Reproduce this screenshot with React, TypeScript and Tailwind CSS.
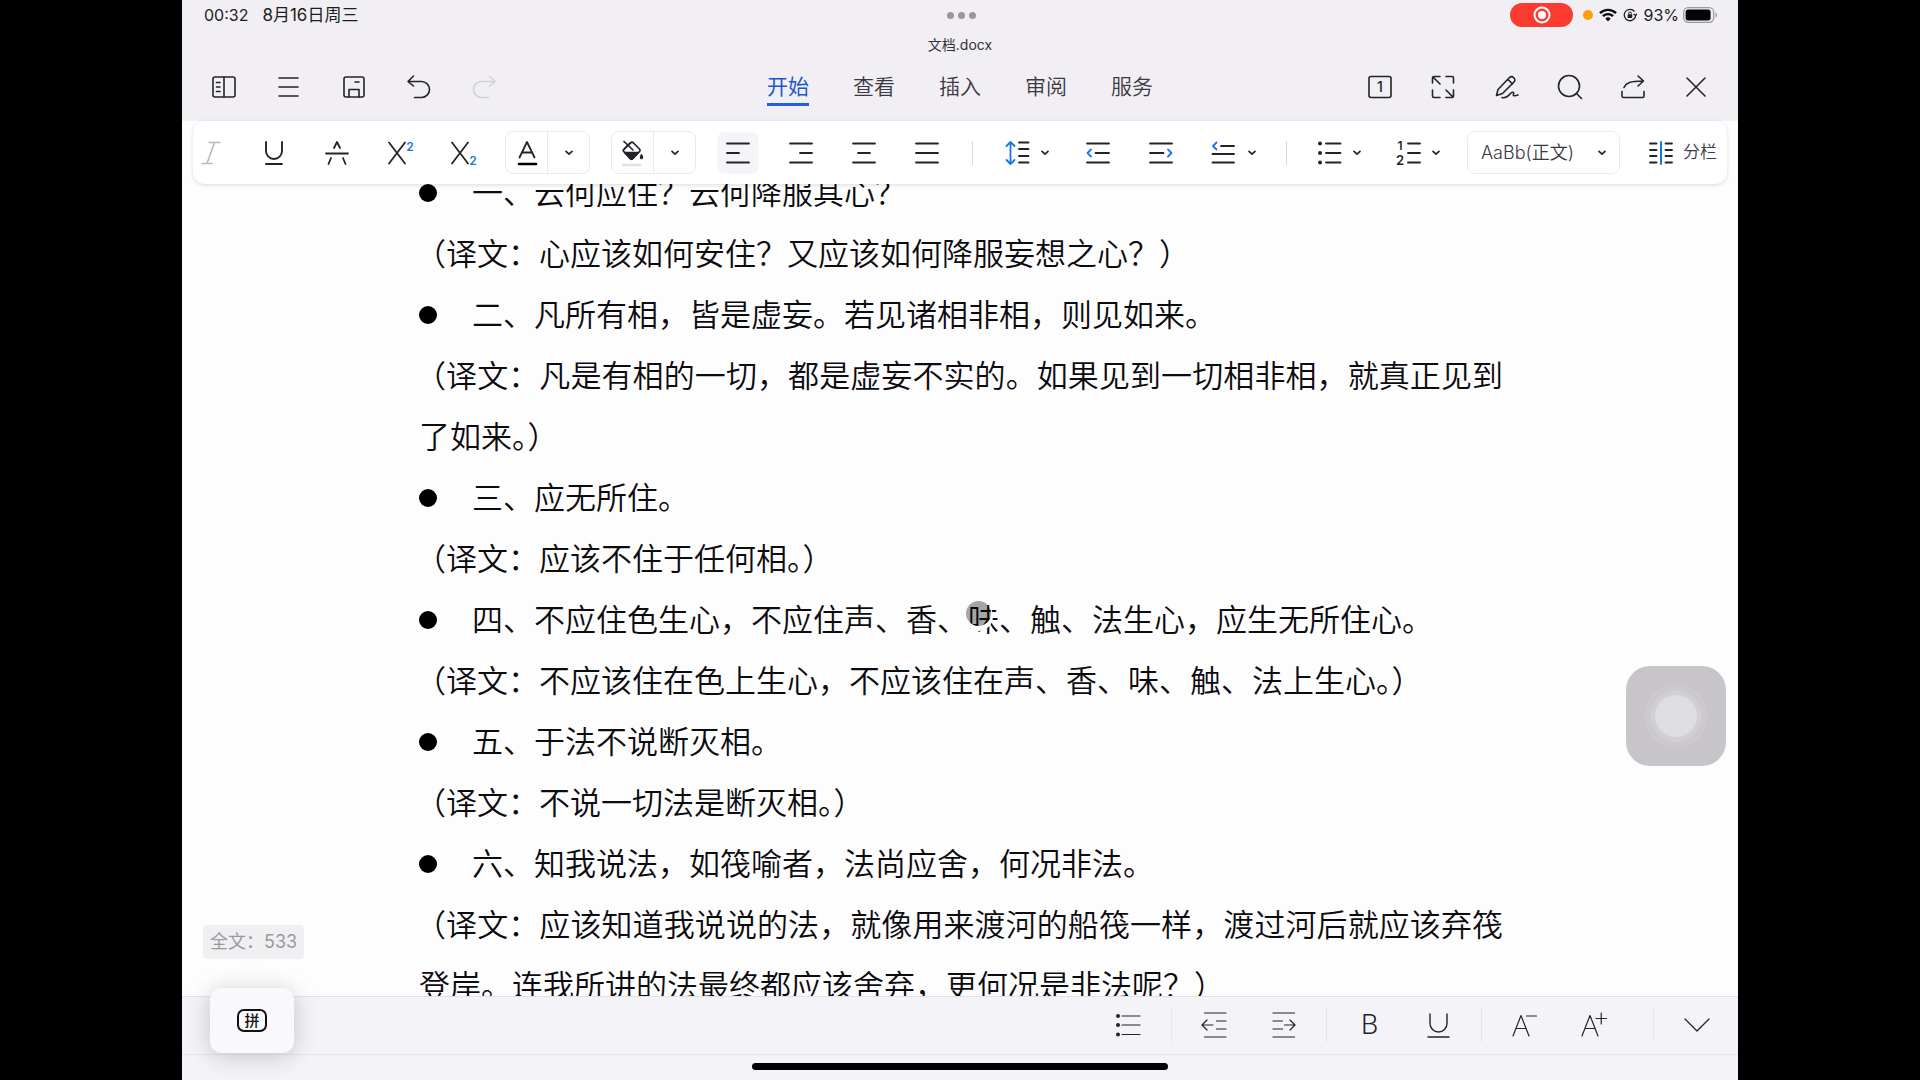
import React from 'react';

const INK = '#242328';
const BLUE = '#1677e6';

interface IconProps {
    children: React.ReactNode;
    size?: number;
    stroke?: number;
    color?: string;
}

/** Line icon on a 24 unit grid */
function Icon({ children, size = 24, stroke = 1.6, color = INK }: IconProps) {
    return (
        <svg
            width={size}
            height={size}
            viewBox="0 0 24 24"
            fill="none"
            stroke={color}
            strokeWidth={stroke}
            strokeLinecap="round"
            strokeLinejoin="round"
            className="shrink-0 overflow-visible"
            aria-hidden="true"
        >
            {children}
        </svg>
    );
}

function Chevron() {
    return (
        <svg width="8" height="6" viewBox="0 0 8 6" fill="none" stroke={INK} strokeWidth="1.7" strokeLinecap="round" strokeLinejoin="round" aria-hidden="true">
            <path d="M1 1.3 4 4.2 7 1.3" />
        </svg>
    );
}

function IconText({ x, y, size, color = INK, weight = 400, children }: { x: number; y: number; size: number; color?: string; weight?: number; children: string }) {
    return (
        <text x={x} y={y} fontSize={size} fontWeight={weight} fontFamily="Inter, sans-serif" fill={color} stroke="none" textAnchor="middle">
            {children}
        </text>
    );
}

interface Tool {
    label: string;
    icon: React.ReactNode;
    disabled?: boolean;
}

const leftTools: Tool[] = [
    {
        label: '目录',
        icon: (
            <Icon>
                <rect x="1" y="2" width="22" height="20" rx="2" />
                <path d="M12 2v20M4.5 7.5h3.5M4.5 12h3.5M4.5 16.5h3.5" />
            </Icon>
        ),
    },
    { label: '菜单', icon: <Icon><path d="M2 3h19M2 12h19M2 21h19" /></Icon> },
    {
        label: '保存',
        icon: (
            <Icon>
                <rect x="2" y="2" width="20" height="20" rx="2" />
                <path d="M7 22v-7.500h10V22M13 7h4" />
            </Icon>
        ),
    },
    { label: '撤销', icon: <Icon><path d="M6.500 1 1 6.500l5.500 4.500M1.500 6.500H14.500a8 8 0 0 1 0 16H7.500" /></Icon> },
    { label: '恢复', disabled: true, icon: <Icon color="#d3d2d6"><path d="M17.500 1 23 6.500l-5.500 4.500M22.500 6.500H9.500a8 8 0 0 0 0 16h7" /></Icon> },
];

const rightTools: Tool[] = [
    {
        label: '页面',
        icon: (
            <Icon>
                <rect x="0" y="1.500" width="22" height="21" rx="2" />
                <IconText x={11} y={17} size={14} weight={500}>1</IconText>
            </Icon>
        ),
    },
    {
        label: '全屏',
        icon: (
            <Icon>
                <path d="M.5 8V3A1.500 1.500 0 0 1 2 1.500h6M14 1.500h6a1.500 1.500 0 0 1 1.500 1.500v5M.5 15v6A1.500 1.500 0 0 0 2 22.500h6M21.500 15v6a1.500 1.500 0 0 1-1.500 1.500h-6M2 3l6 6M21 22l-7-7" />
            </Icon>
        ),
    },
    {
        label: '手写',
        icon: (
            <Icon>
                <path d="M1.500 20.500 3 14.500 14.500 2.500a2.800 2.800 0 0 1 4 0l.5.5a2.800 2.800 0 0 1 0 4L7.500 18.500zM13 4.500l4.500 4.500M7 22.500c4 1 6-1 8-3.500 2-2.500 4.500-2 3.500 0-.8 1.600.5 2.500 4.500 1" />
            </Icon>
        ),
    },
    { label: '搜索', icon: <Icon><circle cx="11" cy="11" r="10.500" /><path d="m18.500 18.500 5 5" /></Icon> },
    { label: '分享', icon: <Icon><path d="M1 16.500V21a1.500 1.500 0 0 0 1.500 1.500h19A1.500 1.500 0 0 0 23 21v-4.500M3 12.500C5 8 9.500 6 21.500 6M17 1l5.500 5-5.500 5" /></Icon> },
    { label: '关闭', icon: <Icon><path d="m3 3 18 18M21 3 3 21" /></Icon> },
];

const textTools: Tool[] = [
    { label: '斜体', disabled: true, icon: <Icon color="#b9b8bc"><path d="M10 1.500h11M3 22.500h10M15.500 1.500 8 22.500" /></Icon> },
    { label: '下划线', icon: <Icon stroke={1.9}><path d="M4 1v9a8 8 0 0 0 16 0V1M4 23h16" /></Icon> },
    { label: '删除线', icon: <Icon stroke={1.8}><path d="M1 12.500h22M9 7l3-6 3 6M6 17l-2.500 6M18 17l2.500 6" /></Icon> },
    {
        label: '上标',
        icon: (
            <Icon stroke={1.8}>
                <path d="m1 1.500 16 21M17 1.500 1 22.500" />
                <IconText x={22} y={10} size={12} weight={600} color={BLUE}>2</IconText>
            </Icon>
        ),
    },
    {
        label: '下标',
        icon: (
            <Icon stroke={1.8}>
                <path d="m1 1.500 16 21M17 1.500 1 22.500" />
                <IconText x={22} y={24} size={12} weight={600} color={BLUE}>2</IconText>
            </Icon>
        ),
    },
];

const alignTools: Tool[] = [
    { label: '左对齐', icon: <Icon stroke={1.8}><path d="M1 2.500h22M1 12h12M1 21.500h22" /></Icon> },
    { label: '右对齐', icon: <Icon stroke={1.8}><path d="M1 2.500h22M11 12h12M1 21.500h22" /></Icon> },
    { label: '居中', icon: <Icon stroke={1.8}><path d="M1 2.500h22M6 12h12M1 21.500h22" /></Icon> },
    { label: '两端对齐', icon: <Icon stroke={1.8}><path d="M1 2.500h22M1 12h22M1 21.500h22" /></Icon> },
];

const tabs = ['开始', '查看', '插入', '审阅', '服务'];

interface Line {
    text: string;
    bullet?: boolean;
}

const lines: Line[] = [
    { bullet: true, text: '一、云何应住？云何降服其心？' },
    { text: '（译文：心应该如何安住？又应该如何降服妄想之心？）' },
    { bullet: true, text: '二、凡所有相，皆是虚妄。若见诸相非相，则见如来。' },
    { text: '（译文：凡是有相的一切，都是虚妄不实的。如果见到一切相非相，就真正见到了如来。）' },
    { bullet: true, text: '三、应无所住。' },
    { text: '（译文：应该不住于任何相。）' },
    { bullet: true, text: '四、不应住色生心，不应住声、香、味、触、法生心，应生无所住心。' },
    { text: '（译文：不应该住在色上生心，不应该住在声、香、味、触、法上生心。）' },
    { bullet: true, text: '五、于法不说断灭相。' },
    { text: '（译文：不说一切法是断灭相。）' },
    { bullet: true, text: '六、知我说法，如筏喻者，法尚应舍，何况非法。' },
    { text: '（译文：应该知道我说说的法，就像用来渡河的船筏一样，渡过河后就应该弃筏登岸。连我所讲的法最终都应该舍弃，更何况是非法呢？）' },
];

function HeaderButton({ label, icon, disabled }: Tool) {
    return (
        <button type="button" aria-label={label} disabled={disabled} className="flex h-10 w-10 items-center justify-center">
            {icon}
        </button>
    );
}

function ToolButton({ label, icon, disabled, active }: Tool & { active?: boolean }) {
    return (
        <button
            type="button"
            aria-label={label}
            disabled={disabled}
            className={`flex h-[42px] w-[42px] shrink-0 items-center justify-center rounded-lg ${active ? 'bg-[#f4f5f8]' : ''}`}
        >
            {icon}
        </button>
    );
}

/** Icon with a small arrow beside it */
function MenuButton({ label, icon }: Tool) {
    return (
        <button type="button" aria-label={label} className="flex h-[42px] w-[60px] shrink-0 items-center gap-3 pl-2">
            {icon}
            <Chevron />
        </button>
    );
}

/** Bordered pair: colour button and its arrow */
function SplitButton({ label, icon }: Tool) {
    return (
        <div className="flex h-[43px] w-[85px] shrink-0 rounded-lg border border-[#e9e9ec]">
            <button type="button" aria-label={label} className="flex flex-1 items-center justify-center border-r border-[#e9e9ec]">
                {icon}
            </button>
            <button type="button" aria-label={`${label}选项`} className="flex flex-1 items-center justify-center">
                <Chevron />
            </button>
        </div>
    );
}

function StatusBar() {
    return (
        <div className="grid h-8 grid-cols-[1fr_auto_1fr] items-center pr-5 pb-0.5 pl-[22px] text-[16px] text-[#1d1c20]">
            <div className="flex items-center gap-[14px]">
                <span>00:32</span>
                <span className="text-[17px] leading-6">8月16日周三</span>
            </div>
            <div className="flex gap-1">
                <span className="h-[7px] w-[7px] rounded-full bg-[#99979b]" />
                <span className="h-[7px] w-[7px] rounded-full bg-[#99979b]" />
                <span className="h-[7px] w-[7px] rounded-full bg-[#99979b]" />
            </div>
            <div className="flex items-center justify-end">
                <span className="flex h-6 w-[63px] items-center justify-center rounded-full bg-[#fb3b30]">
                    <svg width="18" height="18" viewBox="0 0 18 18" aria-hidden="true">
                        <circle cx="9" cy="9" r="7.500" fill="none" stroke="#fff" strokeWidth="2" />
                        <circle cx="9" cy="9" r="4" fill="#fff" />
                    </svg>
                </span>
                <span className="ml-[10px] h-[10px] w-[10px] rounded-full bg-[#ff9f0a]" />
                <svg width="18" height="14" viewBox="0 0 18 14" fill="none" stroke="#0b0b0d" strokeWidth="2.400" className="ml-[6px]" aria-hidden="true">
                    <path d="M1 5.200a11.300 11.300 0 0 1 16 0M4 8.200a7 7 0 0 1 10 0" />
                    <path d="M6.300 10.600a3.800 3.800 0 0 1 5.400 0L9 13.400z" fill="#0b0b0d" stroke="none" />
                </svg>
                <svg width="14" height="14" viewBox="0 0 14 14" fill="none" stroke="#1d1c20" strokeWidth="1.300" className="ml-[6px]" aria-hidden="true">
                    <path d="M11.500 3.500A5.700 5.700 0 1 0 12.700 7M10.500 6l2.200 1.600L14 5.500" />
                    <rect x="4.700" y="6.300" width="4.600" height="3.700" rx=".6" fill="#1d1c20" stroke="none" />
                    <path d="M5.600 6.500V5.400a1.400 1.400 0 0 1 2.800 0v1.100" strokeWidth="1" />
                </svg>
                <span className="ml-[6px]">93%</span>
                <svg width="35" height="16" viewBox="0 0 35 16" className="ml-1" aria-hidden="true">
                    <rect x=".7" y=".7" width="30" height="14.600" rx="4.500" fill="none" stroke="#9b9a9e" strokeWidth="1.300" />
                    <rect x="2.600" y="2.600" width="25" height="10.800" rx="2.500" fill="#050506" />
                    <path d="M32.500 5.500c2 .8 2 4.200 0 5z" fill="#9b9a9e" />
                </svg>
            </div>
        </div>
    );
}

function Header() {
    return (
        <header className="shrink-0 bg-[#f1eff3]">
            <StatusBar />
            <h1 className="h-[26px] text-center text-[14px] leading-[26px] text-[#333237]">文档.docx</h1>
            <div className="grid h-[63px] grid-cols-[1fr_auto_1fr] items-center px-[22px] pb-[6px]">
                <div className="flex gap-[25px]">
                    {leftTools.map((tool) => (
                        <HeaderButton key={tool.label} {...tool} />
                    ))}
                </div>
                <nav className="flex gap-11">
                    {tabs.map((tab, i) => (
                        <a
                            key={tab}
                            href="#"
                            className={`border-b-[3px] pt-[3px] text-[21px] leading-8 ${i === 0 ? 'border-[#1c5fe0] text-[#1b56cf]' : 'border-transparent font-[350] text-[#3a3844]'}`}
                        >
                            {tab}
                        </a>
                    ))}
                </nav>
                <div className="flex justify-end gap-[23px]">
                    {rightTools.map((tool) => (
                        <HeaderButton key={tool.label} {...tool} />
                    ))}
                </div>
            </div>
        </header>
    );
}

function Toolbar() {
    return (
        <div className="absolute inset-x-[11px] top-0 z-10 flex h-[63px] items-center overflow-hidden rounded-xl bg-white shadow-[0_1px_4px_rgba(0,0,0,0.14)]">
            <div className="-ml-[3px] flex shrink-0 items-center gap-[21px]">
                {textTools.map((tool) => (
                    <ToolButton key={tool.label} {...tool} />
                ))}
                <SplitButton
                    label="字体颜色"
                    icon={
                        <Icon stroke={1.8}>
                            <path d="M4.500 16.500 12 1l7.500 15.500M7.500 11.500h9" />
                            <path d="M4 23h17" stroke="#000" strokeWidth="2.600" />
                        </Icon>
                    }
                />
                <SplitButton
                    label="填充颜色"
                    icon={
                        <Icon stroke={1.7}>
                            <path d="M2 9.500 9.500 2c1-1 2-1 3 0l6 6c.8.800.8 1.700 0 2.500l-6.500 7c-1 1-2 1-3 0z" />
                            <path d="M3.500 11.500h14l-6 6.200c-.7.700-1.300.7-2 0z" fill={INK} />
                            <path d="M3 .500l9 8.500M3 8l6-6" />
                            <path d="M20.500 14c-3 4.500 3 4.500 0 0z" fill={INK} />
                            <path d="M2 24h17" stroke="#dfe0e9" strokeWidth="2.600" />
                        </Icon>
                    }
                />
                {alignTools.map((tool, i) => (
                    <ToolButton key={tool.label} {...tool} active={i === 0} />
                ))}
            </div>
            <span className="mx-6 h-6 w-px shrink-0 bg-[#d9d9dd]" />
            <div className="flex shrink-0 items-center gap-[21px]">
                <MenuButton
                    label="行距"
                    icon={
                        <Icon stroke={1.8}>
                            <path d="M5.500 1.500v21M1.500 5l4-4 4 4M1.500 19l4 4 4-4" stroke={BLUE} />
                            <path d="M14 1.500h9.500M14 8h9.500M14 15h9.500M14 21.500h9.500" />
                        </Icon>
                    }
                />
                <ToolButton
                    label="减少缩进"
                    icon={
                        <Icon stroke={1.8}>
                            <path d="M0 2.500h22M8.500 12H22M0 21.500h22" />
                            <path d="M4 8.500.5 12 4 15.500" stroke={BLUE} />
                        </Icon>
                    }
                />
                <ToolButton
                    label="增加缩进"
                    icon={
                        <Icon stroke={1.8}>
                            <path d="M0 2.500h22M0 12h13.500M0 21.500h22" />
                            <path d="M18 8.500l3.500 3.500-3.500 3.500" stroke={BLUE} />
                        </Icon>
                    }
                />
                <MenuButton
                    label="段落缩进"
                    icon={
                        <Icon stroke={1.8}>
                            <path d="M9 5h13M.5 13H22M.5 21.500H22" />
                            <path d="M4.500 1.500 1 5l3.500 3.500" stroke={BLUE} />
                        </Icon>
                    }
                />
            </div>
            <span className="mx-[22px] h-6 w-px shrink-0 bg-[#d9d9dd]" />
            <div className="flex shrink-0 items-center gap-[19px]">
                <MenuButton
                    label="项目符号"
                    icon={
                        <Icon stroke={1.8}>
                            <path d="M9 2.500h14.500M9 12h14.500M9 21.500h14.500" />
                            <path d="M3 2.500h.01M3 12h.01M3 21.500h.01" strokeWidth="4" />
                        </Icon>
                    }
                />
                <MenuButton
                    label="编号"
                    icon={
                        <Icon stroke={1.8}>
                            <path d="M12 2.500h12M12 12h12M12 21.500h12" />
                            <IconText x={4} y={9} size={12} weight={600}>1</IconText>
                            <IconText x={4} y={24} size={13} weight={600}>2</IconText>
                        </Icon>
                    }
                />
                <div className="relative flex items-center">
                    <select aria-label="样式" className="h-[43px] w-[153px] appearance-none rounded-lg border border-[#e9e9ec] bg-white pl-[13px] text-[18px] font-[350] text-[#3a3844]">
                        <option>AaBb(正文)</option>
                    </select>
                    <span className="pointer-events-none absolute right-[14px]">
                        <Chevron />
                    </span>
                </div>
                <button type="button" className="flex items-center gap-[10px] pl-[10px] text-[17px] font-[350] text-[#3a3844]">
                    <Icon stroke={1.8}>
                        <path d="M1 2.500h6.500M1 9h6.500M1 15h6.500M1 21.500h6.500M16.500 2.500H23M16.500 9H23M16.500 15H23M16.500 21.500H23" />
                        <path d="M12 1v22" stroke={BLUE} strokeWidth="2" />
                    </Icon>
                    分栏
                </button>
            </div>
        </div>
    );
}

/** Draws the touch pointer over the character it wraps */
function Touched({ children }: { children: string }) {
    return (
        <span className="relative">
            {children}
            <span className="absolute top-0 -left-0.5 h-[25px] w-[25px] rounded-full bg-black/35 shadow-[0_3px_0_2px_#fefdfe]" />
        </span>
    );
}

function DocumentBody() {
    return (
        <article className="h-full overflow-hidden pt-[41px] pr-[235px] pl-[237px] text-[31px] leading-[61px] font-[350] text-[#0c0b0f]">
            {lines.map((line) => {
                if (!line.bullet) {
                    return (
                        <p key={line.text} className="-indent-1 text-justify">
                            {line.text}
                        </p>
                    );
                }
                const [before, after] = line.text.split('味');
                return (
                    <p key={line.text} className="flex items-center gap-[35px] whitespace-nowrap">
                        <span className="h-[18px] w-[18px] shrink-0 rounded-full bg-black" />
                        <span>
                            {before}
                            {after && <Touched>味</Touched>}
                            {after}
                        </span>
                    </p>
                );
            })}
        </article>
    );
}

function BottomSeparator({ wide }: { wide?: boolean }) {
    return <span className={`mr-2 h-[34px] w-px bg-[#e6e5ea] ${wide ? 'ml-[25px]' : 'ml-2'}`} />;
}

function BottomButton({ label, icon }: Tool) {
    return (
        <button type="button" aria-label={label} className="flex h-[42px] w-[69px] items-center justify-center">
            {icon}
        </button>
    );
}

function BottomBar() {
    return (
        <footer className="relative shrink-0 border-t border-[#e2e1e6] bg-[#f4f3f8]">
            <div className="flex h-[57px] items-center justify-end pr-[7px] pb-0.5">
                <BottomButton
                    label="列表"
                    icon={
                        <Icon stroke={1.2}>
                            <path d="M5 3h18M5 12h18M5 21.500h18" />
                            <path d="M1 3h.01M1 12h.01M1 21.500h.01" strokeWidth="4" />
                        </Icon>
                    }
                />
                <BottomSeparator />
                <BottomButton label="减少缩进" icon={<Icon stroke={1.2}><path d="M1.500 0H23M1.500 24H23M13.500 8H23M13.500 16H23M10 12H0M4 7l-5 5 5 5" /></Icon>} />
                <BottomButton label="增加缩进" icon={<Icon stroke={1.2}><path d="M1 0h21.500M1 24h21.500M1 8h9.500M1 16h9.500M12.500 12h10M18 7l5 5-5 5" /></Icon>} />
                <BottomSeparator />
                <BottomButton label="加粗" icon={<span className="font-[Roboto] text-[28px] leading-8 font-[350] text-[#242328]">B</span>} />
                <BottomButton label="下划线" icon={<Icon stroke={1.4}><path d="M3 1v9.500a8.500 8.500 0 0 0 17 0V1M1 24h21" /></Icon>} />
                <BottomSeparator />
                <BottomButton label="缩小字号" icon={<Icon stroke={1.2}><path d="M0 23 8 2.500 16 23M3 15.500h10M13.500 3h10" /></Icon>} />
                <BottomButton label="增大字号" icon={<Icon stroke={1.2}><path d="M0 23 8 2.500 16 23M3 15.500h10M14 5.500h10.500M19.200 0v11" /></Icon>} />
                <BottomSeparator wide />
                <BottomButton label="收起" icon={<Icon stroke={1.3}><path d="M0 6 12 18 24 6" /></Icon>} />
            </div>
            <div className="h-[26px] border-t border-[#e6e5ea] pt-[8px]">
                <div className="mx-auto h-[7px] w-[416px] max-w-full rounded-full bg-black" />
            </div>
            <button
                type="button"
                aria-label="拼音输入"
                className="absolute -top-[9px] left-[28px] flex h-[65px] w-[84px] items-center justify-center rounded-xl bg-[#f9f9fb] shadow-[0_3px_24px_rgba(0,0,0,0.2)]"
            >
                <span className="flex h-[23px] w-[30px] items-center justify-center rounded-[7px] border-2 border-[#111014] text-[15px] leading-none font-medium text-[#111014]">拼</span>
            </button>
        </footer>
    );
}

export default function App() {
    return (
        <div className="h-screen overflow-hidden bg-black">
            <div className="mx-auto flex aspect-[1556/1080] h-full flex-col bg-[#fefdfe] font-[Inter,'Noto_Sans_CJK_SC',sans-serif]" lang="zh-CN">
                <Header />
                <main className="relative min-h-0 flex-1">
                    <Toolbar />
                    <DocumentBody />
                    <div className="absolute bottom-[37px] left-[21px] rounded-[4px] bg-[#f0eff1] px-[7px] text-[18px] leading-[34px] text-[#9b999e]">全文：533</div>
                    <button
                        type="button"
                        aria-label="辅助触控"
                        className="absolute right-3 bottom-[230px] flex h-[100px] w-[100px] items-center justify-center rounded-3xl bg-[#c7c5c9]"
                    >
                        <span className="flex h-16 w-16 items-center justify-center rounded-full bg-[#cbc9cd]">
                            <span className="flex h-[52px] w-[52px] items-center justify-center rounded-full bg-[#d1cfd3]">
                                <span className="h-[42px] w-[42px] rounded-full bg-[#dedde0]" />
                            </span>
                        </span>
                    </button>
                </main>
                <BottomBar />
            </div>
        </div>
    );
}
